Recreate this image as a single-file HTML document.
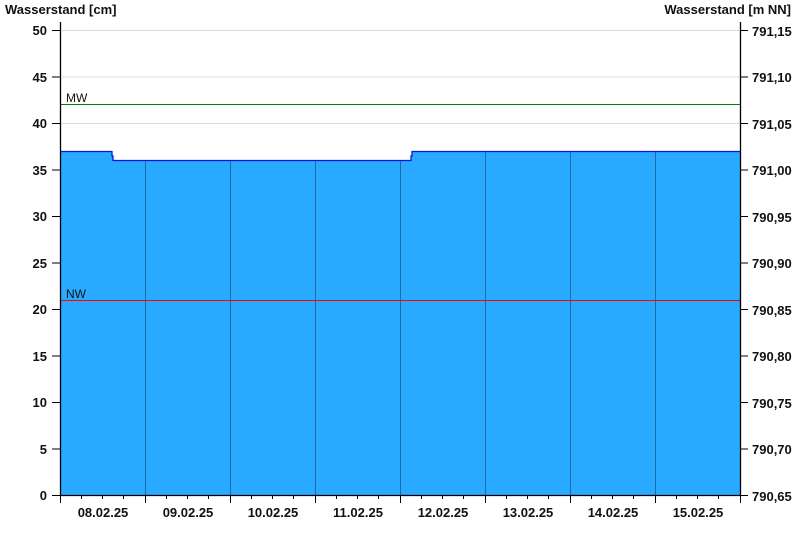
<!DOCTYPE html>
<html><head><meta charset="utf-8"><style>
html,body{margin:0;padding:0;background:#fff;width:800px;height:550px;overflow:hidden}
svg{display:block}
text{font-family:"Liberation Sans",Arial,sans-serif;font-size:13px;font-weight:bold;fill:#111}
</style></head><body>
<svg width="800" height="550" viewBox="0 0 800 550" xmlns="http://www.w3.org/2000/svg">
<text x="5" y="14">Wasserstand [cm]</text>
<text x="791" y="14" text-anchor="end">Wasserstand [m NN]</text>
<g stroke="#dcdcdc" stroke-width="1">
<line x1="60" y1="30.5" x2="740" y2="30.5"/>
<line x1="60" y1="77" x2="740" y2="77"/>
<line x1="60" y1="123.5" x2="740" y2="123.5"/>
</g>
<path d="M60.5,151.5 H112 V156 H113 V160.5 H411 V156 H412 V151.5 H740 V495 H60.5 Z" fill="#29a9ff"/>
<path d="M60.5,151.5 H112 V156 H113 V160.5 H411 V156 H412 V151.5 H740" fill="none" stroke="#0a14e6" stroke-width="1.3"/>
<g stroke="#1f6a9f" stroke-width="1">
<line x1="145.5" y1="161" x2="145.5" y2="495"/>
<line x1="230.5" y1="161" x2="230.5" y2="495"/>
<line x1="315.5" y1="161" x2="315.5" y2="495"/>
<line x1="400.5" y1="161" x2="400.5" y2="495"/>
<line x1="485.5" y1="152" x2="485.5" y2="495"/>
<line x1="570.5" y1="152" x2="570.5" y2="495"/>
<line x1="655.5" y1="152" x2="655.5" y2="495"/>
</g>
<line x1="60" y1="104.5" x2="740" y2="104.5" stroke="#008000" stroke-width="1"/>
<line x1="60" y1="300.5" x2="740" y2="300.5" stroke="#ff0000" stroke-width="1"/>
<text x="66" y="102" style="font-weight:normal;font-size:12px">MW</text>
<text x="66" y="298" style="font-weight:normal;font-size:12px">NW</text>
<g stroke="#000" stroke-width="1.3">
<line x1="60.5" y1="22" x2="60.5" y2="495"/>
<line x1="740.5" y1="22" x2="740.5" y2="495"/>
<line x1="60" y1="495.5" x2="741" y2="495.5"/>
</g>
<g stroke="#000" stroke-width="1">
<path d="M52,30.5H60M52,77H60M52,123.5H60M52,170H60M52,216.5H60M52,263H60M52,309.5H60M52,356H60M52,402.5H60M52,449H60M52,495.5H60"/>
<path d="M740,30.5H748M740,77H748M740,123.5H748M740,170H748M740,216.5H748M740,263H748M740,309.5H748M740,356H748M740,402.5H748M740,449H748M740,495.5H748"/>
<path d="M60.5,495V503M145.5,495V503M230.5,495V503M315.5,495V503M400.5,495V503M485.5,495V503M570.5,495V503M655.5,495V503M740.5,495V503"/>
<path d="M81.5,495V499M102.5,495V499M123.5,495V499M166.5,495V499M187.5,495V499M208.5,495V499M251.5,495V499M272.5,495V499M293.5,495V499M336.5,495V499M357.5,495V499M378.5,495V499M421.5,495V499M442.5,495V499M463.5,495V499M506.5,495V499M527.5,495V499M548.5,495V499M591.5,495V499M612.5,495V499M633.5,495V499M676.5,495V499M697.5,495V499M718.5,495V499"/>
</g>
<g text-anchor="end" font-size="14">
<text x="47" y="35">50</text><text x="47" y="82">45</text><text x="47" y="128">40</text>
<text x="47" y="175">35</text><text x="47" y="221">30</text><text x="47" y="268">25</text>
<text x="47" y="314">20</text><text x="47" y="361">15</text><text x="47" y="407">10</text>
<text x="47" y="454">5</text><text x="47" y="500">0</text>
</g>
<g>
<text x="752" y="36">791,15</text><text x="752" y="82">791,10</text><text x="752" y="129">791,05</text>
<text x="752" y="175">791,00</text><text x="752" y="222">790,95</text><text x="752" y="268">790,90</text>
<text x="752" y="315">790,85</text><text x="752" y="361">790,80</text><text x="752" y="408">790,75</text>
<text x="752" y="454">790,70</text><text x="752" y="501">790,65</text>
</g>
<g text-anchor="middle">
<text x="103" y="517">08.02.25</text><text x="188" y="517">09.02.25</text>
<text x="273" y="517">10.02.25</text><text x="358" y="517">11.02.25</text>
<text x="443" y="517">12.02.25</text><text x="528" y="517">13.02.25</text>
<text x="613" y="517">14.02.25</text><text x="698" y="517">15.02.25</text>
</g>
</svg>
</body></html>
